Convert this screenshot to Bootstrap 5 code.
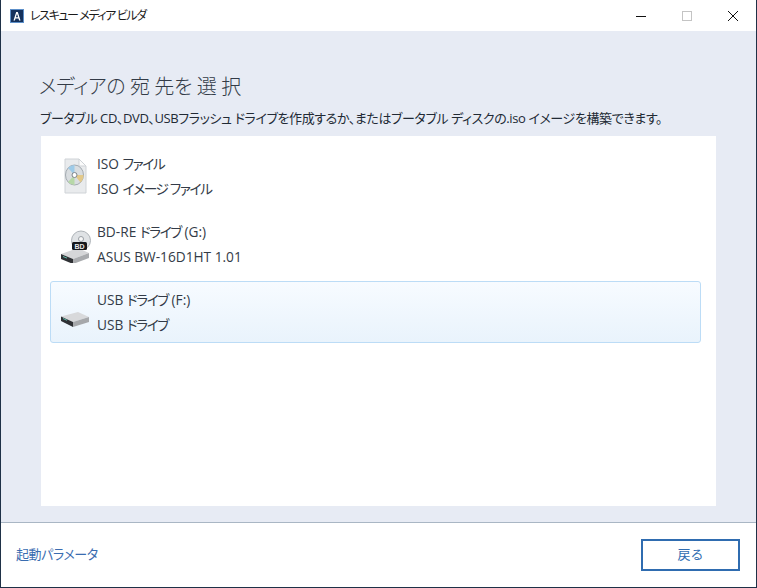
<!DOCTYPE html>
<html lang="ja">

<head>
    <title>レスキュー メディア ビルダ</title>
    <link href="https://cdn.jsdelivr.net/npm/bootstrap@5.3.0/dist/css/bootstrap.min.css" rel="stylesheet">
    <style>
        html, body {
            height: 100%;
            margin: 0;
            background: #fff;
        }

        .app-window {
            width: 757px;
            height: 588px;
            border: 1px solid #1f3147;
            border-top: 0;
            font-family: "Open Sans", "Noto Sans CJK JP", sans-serif;
            font-feature-settings: "palt";
            color: #2b3440;
            overflow: hidden;
        }

        .title-bar {
            height: 31px;
            font-size: 12px;
            color: #1a1a1a;
            padding-left: 9px;
        }

        .title-text {
            margin-left: 6px;
            letter-spacing: -1.4px;
        }

        .win-btn {
            width: 46px;
            height: 31px;
        }

        .main-panel {
            background: #e7ebf4;
            height: 491px;
            padding: 0 40px 16px 40px;
        }

        .page-heading {
            font-size: 20px;
            font-weight: 300;
            line-height: 28px;
            letter-spacing: -0.4px;
            margin: 42px 0 0 -2px;
            color: #333b47;
        }

        .page-sub {
            font-size: 13px;
            line-height: 18px;
            letter-spacing: -0.4px;
            margin: 8px 0 9px -1px;
            color: #222a35;
            white-space: nowrap;
        }

        .dest-list {
            background: #fff;
            padding: 9px 15px 0 9px;
            gap: 6px;
        }

        .dest-row {
            height: 62px;
            border: 1px solid transparent;
            border-radius: 3px;
            padding-left: 8px;
            font-size: 13.7px;
            color: #333b47;
        }

        .dest-row.selected-row {
            border-color: #bcdcf6;
            background: linear-gradient(#f7fbff, #e9f3fc);
        }

        .dest-icon {
            width: 38px;
            height: 38px;
            flex-shrink: 0;
        }

        .dest-text div {
            line-height: 25px;
        }

        .kana-run {
            letter-spacing: -1.4px;
        }

        .footer-bar {
            border-top: 1px solid #a9b6c4;
            height: 65px;
            padding: 0 16px 0 15px;
            font-size: 13px;
        }

        .boot-link {
            color: #3a6cb0;
            text-decoration: none;
            letter-spacing: -0.4px;
        }

        .back-btn {
            width: 99px;
            height: 32px;
            border: 2px solid #2f6cb0;
            border-radius: 0;
            color: #2f6cb0;
            background: #fff;
            font-size: 13px;
            padding: 0;
        }

        .bd-label {
            font-family: "Liberation Sans", sans-serif;
            font-size: 7px;
            font-weight: 700;
            fill: #e8e8e8;
        }
    </style>
</head>

<body>

    <div class="app-window d-flex flex-column">
        <!-- title bar -->
        <div class="title-bar d-flex align-items-center">
            <svg width="14" height="14" viewBox="0 0 14 14">
                <rect x="0.5" y="0.5" width="13" height="13" fill="#14315c" stroke="#5c8fc9" />
                <path d="M3.5 11.5 6.2 3h1.6l2.7 8.500H9.100L8.500 9.500h-3l-.6 2zM5.900 8.200h2.200L7 4.800z" fill="#fff" />
            </svg>
            <span class="title-text">レスキュー メディア ビルダ</span>
            <div class="ms-auto d-flex">
                <div class="win-btn d-flex align-items-center justify-content-center">
                    <svg width="10" height="10" viewBox="0 0 10 10"><path d="M0 5.500h10" stroke="#111" /></svg>
                </div>
                <div class="win-btn d-flex align-items-center justify-content-center">
                    <svg width="10" height="10" viewBox="0 0 10 10"><rect x="0.5" y="0.5" width="9" height="9" fill="none" stroke="#c4c4c4" /></svg>
                </div>
                <div class="win-btn d-flex align-items-center justify-content-center">
                    <svg width="10" height="10" viewBox="0 0 10 10"><path d="M0 0l10 10M10 0L0 10" stroke="#111" /></svg>
                </div>
            </div>
        </div>

        <!-- main area -->
        <div class="main-panel d-flex flex-column">
            <h1 class="page-heading">メディアの 宛 先を 選 択</h1>
            <p class="page-sub">ブータブル CD、DVD、USBフラッシュ ドライブを作成するか、またはブータブル ディスクの.iso イメージを構築できます。</p>

            <div class="dest-list flex-grow-1 d-flex flex-column">
                <div class="dest-row d-flex align-items-center">
                    <svg class="dest-icon" viewBox="0 0 38 38">
                        <path d="M6 2h14l7 7v27H6z" fill="#e9ebed" stroke="#cfd3d7" />
                        <path d="M20 2v7h7z" fill="#fbfbfb" stroke="#cfd3d7" />
                        <ellipse cx="15.500" cy="18" rx="9" ry="10" fill="#d9dde0" stroke="#a3aab0" />
                        <path d="M15.500 18 9 11a9 10 0 0 1 6.500-3z" fill="#9ecbe8" />
                        <path d="M15.500 18h9a9 10 0 0 1-3 7.500z" fill="#e3c98a" />
                        <path d="M15.500 18 9 25a9 10 0 0 0 6.500 3z" fill="#b7d8a8" />
                        <circle cx="15.500" cy="18" r="2.500" fill="#fff" stroke="#7f868c" />
                    </svg>
                    <div class="dest-text">
                        <div>ISO <span class="kana-run">ファイル</span></div>
                        <div>ISO <span class="kana-run">イメージ ファイル</span></div>
                    </div>
                </div>
                <div class="dest-row d-flex align-items-center">
                    <svg class="dest-icon" viewBox="0 0 38 38">
                        <circle cx="22" cy="15.500" r="9.500" fill="#dfe2e5" stroke="#aeb3b8" />
                        <circle cx="22" cy="14" r="2.500" fill="#f7f7f7" stroke="#9a9fa5" />
                        <path d="M2 29 19 23l11 5-16 6z" fill="#d5d6d8" />
                        <path d="M2 29l12 5v5L2 34z" fill="#2f3135" />
                        <path d="M14 34l16-6v5l-16 6z" fill="#a9abae" />
                        <rect x="13" y="17" width="15" height="8" rx="1.500" fill="#16181c" />
                        <text class="bd-label" x="15.500" y="23.500">BD</text>
                        <path d="M4 31.500l4 1.600" stroke="#5fb7a5" />
                    </svg>
                    <div class="dest-text">
                        <div>BD-RE <span class="kana-run">ドライブ</span> (G:)</div>
                        <div>ASUS BW-16D1HT 1.01</div>
                    </div>
                </div>
                <div class="dest-row selected-row d-flex align-items-center">
                    <svg class="dest-icon" viewBox="0 0 38 38">
                        <path d="M2 23.500 19 19l11 5-16 5z" fill="#d8d9db" />
                        <path d="M2 23.500l12 5.500v5L2 28z" fill="#2f3135" />
                        <path d="M14 29l16-5v5l-16 5z" fill="#a6a8ab" />
                        <path d="M4 25.500l4 1.800" stroke="#5fb7a5" />
                    </svg>
                    <div class="dest-text">
                        <div>USB <span class="kana-run">ドライブ</span> (F:)</div>
                        <div>USB <span class="kana-run">ドライブ</span></div>
                    </div>
                </div>
            </div>
        </div>

        <!-- footer -->
        <div class="footer-bar d-flex align-items-center justify-content-between">
            <a class="boot-link" href="#">起動パラメータ</a>
            <button class="btn back-btn" type="button">戻る</button>
        </div>
    </div>

    <script src="https://cdn.jsdelivr.net/npm/bootstrap@5.3.0/dist/js/bootstrap.bundle.min.js"></script>
</body>

</html>
